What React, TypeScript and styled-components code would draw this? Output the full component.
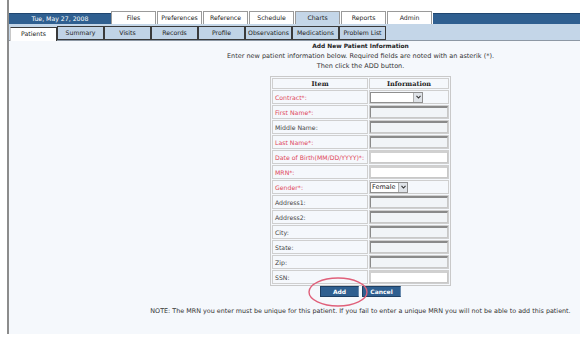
import React from 'react';
import styled, { createGlobalStyle } from 'styled-components';

const GlobalStyle = createGlobalStyle`
  html, body {
    margin: 0;
    padding: 0;
    background: #ffffff;
  }
  body {
    font-family: "DejaVu Sans", Verdana, sans-serif;
  }
`;

const Frame = styled.div`
  margin-left: 7px;
  width: 571px;
  height: 334px;
  border-left: 2px solid #8c8c8c;
  display: flex;
  flex-direction: column;
  background: #f5f8fc;
`;

const TopRow = styled.div`
  display: flex;
  align-items: flex-end;
  height: 24px;
  background: #ffffff;
`;

const DateBar = styled.div`
  width: 102px;
  height: 10px;
  background: #2f5f90;
  border-top: 1px solid #1f4670;
  color: #ffffff;
  font-size: 6.2px;
  line-height: 10px;
  text-align: center;
`;

const TopTab = styled.div<{ $active?: boolean }>`
  width: 45px;
  height: 13px;
  margin-right: 1px;
  box-sizing: border-box;
  border: 1px solid #9a9a9a;
  border-bottom: none;
  background: ${(p) => (p.$active ? '#c4d6e8' : '#ffffff')};
  color: #222;
  font-size: 6.2px;
  line-height: 12px;
  text-align: center;
`;

const Filler = styled.div`
  flex: 1;
  height: 10px;
  background: #2f5f90;
  border-top: 1px solid #1f4670;
`;

const SubRow = styled.div`
  display: flex;
  align-items: flex-end;
  height: 16px;
  padding-left: 1px;
  background: #c4d6e8;
  border-bottom: 1px solid #8d98a4;
`;

const SubTab = styled.div<{ $active?: boolean }>`
  width: 47px;
  height: 14px;
  box-sizing: border-box;
  border: 1px solid #3a3a3a;
  border-bottom: ${(p) => (p.$active ? 'none' : '1px solid #3a3a3a')};
  margin-bottom: ${(p) => (p.$active ? '-1px' : '0')};
  border-left-color: ${(p) => (p.$active ? '#c8c8c8' : '#3a3a3a')};
  background: ${(p) => (p.$active ? '#ffffff' : '#c0d3e6')};
  color: #222;
  font-size: 6.2px;
  line-height: 12px;
  text-align: center;
  white-space: nowrap;
  overflow: hidden;
`;

const Content = styled.div`
  flex: 1;
  padding-left: 132px;
  display: flex;
  flex-direction: column;
  align-items: center;
  font-size: 6.5px;
  color: #333;
`;

const Heading = styled.div`
  font-weight: bold;
  font-size: 5.9px;
  line-height: 10px;
  color: #222;
`;

const Line = styled.div`
  line-height: 10px;
  white-space: nowrap;
`;

const Table = styled.table`
  margin-top: 5px;
  border-collapse: separate;
  border-spacing: 1px;
  border: 1px solid #c9c9c9;
  width: 181px;
  table-layout: fixed;
`;

const Th = styled.th<{ $w?: number }>`
  width: ${(p) => (p.$w ? `${p.$w}px` : 'auto')};
  font-family: "DejaVu Serif", "Liberation Serif", serif;
  font-size: 6.5px;
  font-weight: bold;
  color: #222;
  height: 11px;
  padding: 0;
  border: 1px solid #cfcfcf;
  box-sizing: border-box;
`;

const LabelCell = styled.td<{ $req?: boolean }>`
  height: 14px;
  box-sizing: border-box;
  padding: 0 0 0 2px;
  border: 1px solid #cfcfcf;
  color: ${(p) => (p.$req ? '#e0475a' : '#444')};
  font-size: 6.2px;
  white-space: nowrap;
  overflow: hidden;
`;

const InputCell = styled.td`
  height: 14px;
  box-sizing: border-box;
  padding: 0;
  border: 1px solid #cfcfcf;
`;

const TextBox = styled.div<{ $plain?: boolean }>`
  width: 100%;
  height: 12px;
  box-sizing: border-box;
  border: 1px solid #c8c8c8;
  border-top: 2px solid ${(p) => (p.$plain ? '#d0d0d0' : '#8a8a8a')};
  border-left: 1px solid ${(p) => (p.$plain ? '#d0d0d0' : '#8a8a8a')};
  background: ${(p) => (p.$plain ? '#ffffff' : '#f1f4f7')};
`;

const Select = styled.div<{ $w: number }>`
  width: ${(p) => p.$w}px;
  height: 11px;
  box-sizing: border-box;
  border: 1px solid #8f8f8f;
  background: #ffffff;
  display: flex;
  align-items: center;
  justify-content: space-between;
  font-size: 6.5px;
  color: #222;
  padding-left: 1px;
`;

const Arrow = styled.div`
  width: 8px;
  height: 9px;
  background: #dfe3e8;
  border-left: 1px solid #b0b0b0;
  display: flex;
  align-items: center;
  justify-content: center;
`;

const Buttons = styled.div`
  position: relative;
  display: flex;
  gap: 3px;
  margin-top: 0;
`;

const Button = styled.div`
  width: 39px;
  height: 11px;
  box-sizing: border-box;
  background: #2f5f90;
  border: 1px solid #1e3f63;
  border-right-color: #6b8db0;
  color: #ffffff;
  font-weight: bold;
  font-size: 6px;
  line-height: 9px;
  text-align: center;
`;

const Circle = styled.svg`
  position: absolute;
  left: -13px;
  top: -10px;
  pointer-events: none;
`;

const Note = styled.div`
  margin-top: 10px;
  font-size: 6.4px;
  color: #333;
  white-space: nowrap;
`;

const top = ['Files', 'Preferences', 'Reference', 'Schedule', 'Charts', 'Reports', 'Admin'];
const sub = ['Patients', 'Summary', 'Visits', 'Records', 'Profile', 'Observations', 'Medications', 'Problem List'];

type Row = { label: string; req?: boolean; kind?: 'text' | 'plain' | 'contract' | 'gender' };
const rows: Row[] = [
  { label: 'Contract*:', req: true, kind: 'contract' },
  { label: 'First Name*:', req: true },
  { label: 'Middle Name:' },
  { label: 'Last Name*:', req: true },
  { label: 'Date of Birth(MM/DD/YYYY)*:', req: true, kind: 'plain' },
  { label: 'MRN*:', req: true, kind: 'plain' },
  { label: 'Gender*:', req: true, kind: 'gender' },
  { label: 'Address1:' },
  { label: 'Address2:' },
  { label: 'City:' },
  { label: 'State:' },
  { label: 'Zip:' },
  { label: 'SSN:', kind: 'plain' },
];

function DownArrow() {
  return (
    <Arrow>
      <svg width="5" height="4" viewBox="0 0 5 4">
        <path d="M0.5 0.8 L2.5 3 L4.5 0.8" stroke="#333" strokeWidth="1.1" fill="none" />
      </svg>
    </Arrow>
  );
}

function Field({ kind }: { kind?: Row['kind'] }) {
  if (kind === 'contract') {
    return (
      <Select $w={53}>
        <span />
        <DownArrow />
      </Select>
    );
  }
  if (kind === 'gender') {
    return (
      <Select $w={38}>
        <span>Female</span>
        <DownArrow />
      </Select>
    );
  }
  return <TextBox $plain={kind === 'plain'} />;
}

export default function App() {
  return (
    <>
      <GlobalStyle />
      <Frame>
        <TopRow>
          <DateBar>Tue, May 27, 2008</DateBar>
          {top.map((t) => (
            <TopTab key={t} $active={t === 'Charts'}>
              {t}
            </TopTab>
          ))}
          <Filler />
        </TopRow>
        <SubRow>
          {sub.map((t) => (
            <SubTab key={t} $active={t === 'Patients'}>
              {t}
            </SubTab>
          ))}
        </SubRow>
        <Content>
          <Heading>Add New Patient Information</Heading>
          <Line>Enter new patient information below. Required fields are noted with an asterik (*).</Line>
          <Line>Then click the ADD button.</Line>
          <Table>
            <thead>
              <tr>
                <Th $w={96}>Item</Th>
                <Th>Information</Th>
              </tr>
            </thead>
            <tbody>
              {rows.map((r) => (
                <tr key={r.label}>
                  <LabelCell $req={r.req}>{r.label}</LabelCell>
                  <InputCell>
                    <Field kind={r.kind} />
                  </InputCell>
                </tr>
              ))}
            </tbody>
          </Table>
          <Buttons>
            <Button>Add</Button>
            <Button>Cancel</Button>
            <Circle width="62" height="32" viewBox="0 0 62 32">
              <ellipse cx="31" cy="16" rx="29" ry="14" fill="none" stroke="#e0607a" strokeWidth="1.4" />
            </Circle>
          </Buttons>
          <Note>
            NOTE: The MRN you enter must be unique for this patient. If you fail to enter a unique MRN you will not be able to add this patient.
          </Note>
        </Content>
      </Frame>
    </>
  );
}
